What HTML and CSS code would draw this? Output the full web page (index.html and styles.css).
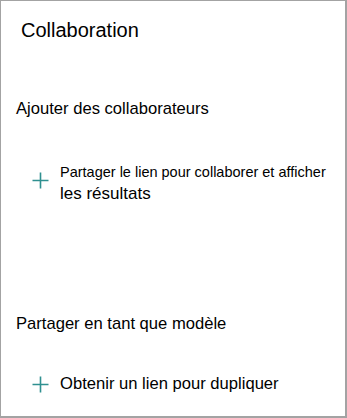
FILE: index.html
```
<!DOCTYPE html>
<html lang="fr">
<head>
    <meta charset="UTF-8">
    <meta name="viewport" content="width=device-width, initial-scale=1.0">
    <title>Collaboration</title>
    <link rel="stylesheet" href="styles.css">
</head>
<body>
    <div class="panel">
        <h1 class="panel-title">Collaboration</h1>

        <h2 class="section-title section-first">Ajouter des collaborateurs</h2>
        <div class="action action-wrap">
            <svg class="plus" width="17" height="17" viewBox="0 0 17 17">
                <path d="M8.5 0.5V16.5M0.5 8.5H16.5" stroke="#2f9090" stroke-width="1.6" fill="none"/>
            </svg>
            <div class="action-text">
                <span class="line-small">Partager le lien pour collaborer et afficher</span>
                <span class="line-big">les résultats</span>
            </div>
        </div>

        <h2 class="section-title section-second">Partager en tant que modèle</h2>
        <div class="action action-single">
            <svg class="plus" width="17" height="17" viewBox="0 0 17 17">
                <path d="M8.5 0.5V16.5M0.5 8.5H16.5" stroke="#2f9090" stroke-width="1.6" fill="none"/>
            </svg>
            <div class="action-text">Obtenir un lien pour dupliquer</div>
        </div>
    </div>
</body>
</html>
```

FILE: styles.css
```
body {
    margin: 0;
    font-family: "Liberation Sans", Arial, sans-serif;
    color: #000;
    background: #fff;
}
.panel {
    box-sizing: border-box;
    width: 347px;
    height: 418px;
    border: 1px solid #a3a3a3;
    border-right-width: 2px;
    border-bottom-width: 2px;
    padding: 17px 0 0 15px;
    overflow: hidden;
}
.panel-title {
    margin: 0 0 0 5px;
    font-size: 20px;
    font-weight: normal;
    line-height: 24px;
}
.section-title {
    margin: 0;
    font-size: 16.6px;
    font-weight: normal;
    line-height: 20px;
}
.section-first {
    margin-top: 57px;
}
.section-second {
    margin-top: 109px;
}
.action {
    display: flex;
    padding-left: 16px;
}
.action-wrap {
    margin-top: 43px;
    align-items: flex-start;
}
.action-wrap .plus {
    margin-top: 10px;
}
.action-single {
    margin-top: 40px;
    align-items: center;
    font-size: 16.6px;
    line-height: 20px;
}
.plus {
    flex: none;
    margin-right: 11px;
}
.action-text {
    width: 267px;
    overflow: hidden;
    white-space: nowrap;
}
.line-small {
    display: block;
    font-size: 14.5px;
    line-height: 20px;
}
.line-big {
    display: block;
    font-size: 17px;
    line-height: 23px;
}
```
